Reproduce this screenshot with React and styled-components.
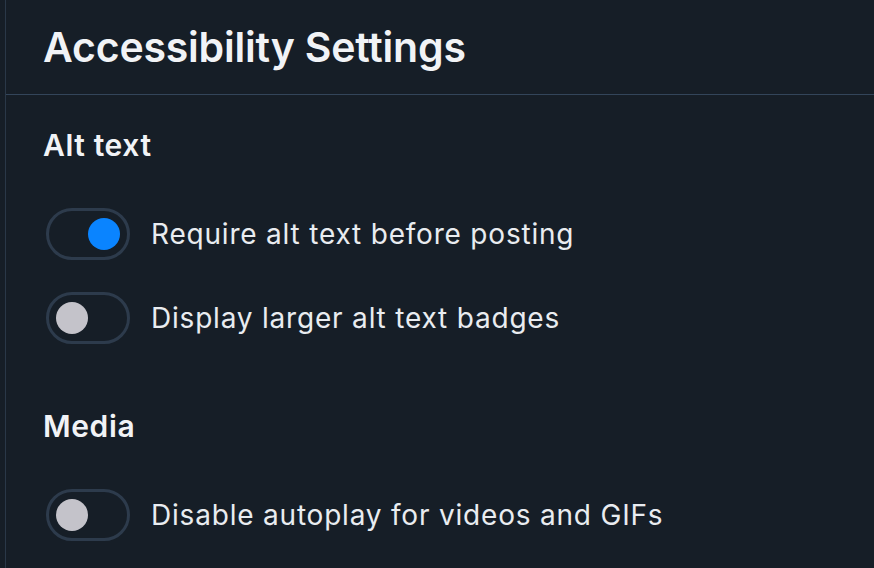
import React, { useState } from 'react';
import styled, { createGlobalStyle } from 'styled-components';

const GlobalStyle = createGlobalStyle`
  html, body {
    margin: 0;
    padding: 0;
    background: #161e27;
  }
  body {
    font-family: Inter, "Noto Sans", "Liberation Sans", sans-serif;
    -webkit-font-smoothing: antialiased;
  }
`;

const Page = styled.div`
  display: flex;
  min-height: 100vh;
  background: #161e27;
  padding-left: 5px;
`;

const Column = styled.main`
  flex: 1;
  border-left: 1px solid #2a3848;
`;

const Header = styled.header`
  height: 94px;
  display: flex;
  align-items: center;
  padding-left: 37px;
  border-bottom: 1px solid #33455a;
`;

const Title = styled.h1`
  margin: 0;
  font-size: 41px;
  font-weight: 600;
  color: #f1f3f6;
  letter-spacing: -0.2px;
`;

const Section = styled.section`
  padding-left: 37px;
  margin-top: ${p => p.top}px;
`;

const SectionTitle = styled.h2`
  margin: 0 0 45px;
  font-size: 30px;
  line-height: 36px;
  font-weight: 600;
  letter-spacing: 0.6px;
  color: #f1f3f6;
`;

const Rows = styled.div`
  display: flex;
  flex-direction: column;
  gap: 32px;
`;

const Row = styled.label`
  display: flex;
  align-items: center;
  gap: 21px;
  margin-left: 3px;
  cursor: pointer;
`;

const Track = styled.span`
  box-sizing: border-box;
  width: 84px;
  height: 52px;
  padding: 0 7px;
  border: 3px solid #2d3b4c;
  border-radius: 26px;
  display: flex;
  align-items: center;
  justify-content: ${p => (p.on ? 'flex-end' : 'flex-start')};
  flex-shrink: 0;
`;

const Knob = styled.span`
  width: 32px;
  height: 32px;
  border-radius: 50%;
  background: ${p => (p.on ? '#0a84ff' : '#c4c3ca')};
`;

const Label = styled.span`
  font-size: 28px;
  letter-spacing: 0.8px;
  color: #e9ecf0;
`;

const Toggle = ({ label, on, onToggle }) => (
  <Row onClick={onToggle}>
    <Track on={on}>
      <Knob on={on} />
    </Track>
    <Label>{label}</Label>
  </Row>
);

export default function App() {
  const [opts, setOpts] = useState({
    requireAlt: true,
    largeBadges: false,
    noAutoplay: false
  });
  const flip = key => () => setOpts(o => ({ ...o, [key]: !o[key] }));

  return (
    <Page>
      <GlobalStyle />
      <Column>
        <Header>
          <Title>Accessibility Settings</Title>
        </Header>
        <Section top={32}>
          <SectionTitle>Alt text</SectionTitle>
          <Rows>
            <Toggle
              label="Require alt text before posting"
              on={opts.requireAlt}
              onToggle={flip('requireAlt')}
            />
            <Toggle
              label="Display larger alt text badges"
              on={opts.largeBadges}
              onToggle={flip('largeBadges')}
            />
          </Rows>
        </Section>
        <Section top={64}>
          <SectionTitle>Media</SectionTitle>
          <Rows>
            <Toggle
              label="Disable autoplay for videos and GIFs"
              on={opts.noAutoplay}
              onToggle={flip('noAutoplay')}
            />
          </Rows>
        </Section>
      </Column>
    </Page>
  );
}
